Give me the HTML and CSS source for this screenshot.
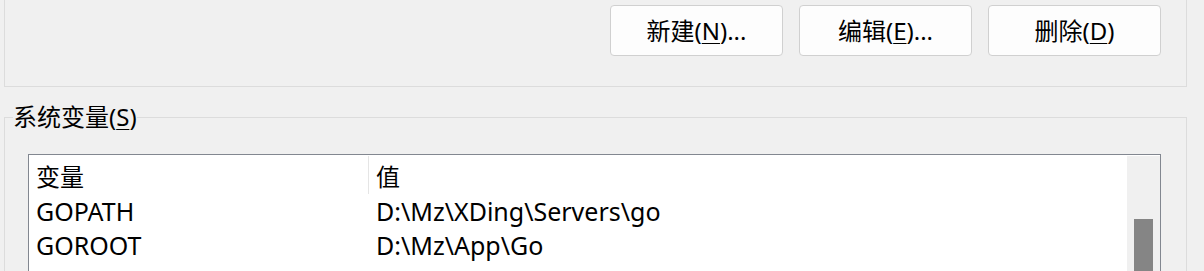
FILE: index.html
```html
<!DOCTYPE html>
<html lang="zh-CN">
<head>
  <meta charset="UTF-8">
  <title>环境变量</title>
  <link rel="stylesheet" href="styles.css">
</head>
<body>
  <div class="user-group">
    <div class="buttons">
      <button class="btn">新建(<u>N</u>)...</button>
      <button class="btn">编辑(<u>E</u>)...</button>
      <button class="btn">删除(<u>D</u>)</button>
    </div>
  </div>

  <fieldset class="sys-group">
    <legend>系统变量(<u>S</u>)</legend>
    <div class="listbox">
      <div class="list-main">
        <div class="row header">
          <div class="col name">变量</div>
          <div class="col value">值</div>
        </div>
        <div class="row">
          <div class="col name">GOPATH</div>
          <div class="col value">D:\Mz\XDing\Servers\go</div>
        </div>
        <div class="row">
          <div class="col name">GOROOT</div>
          <div class="col value">D:\Mz\App\Go</div>
        </div>
      </div>
      <div class="scrollbar">
        <div class="thumb"></div>
      </div>
    </div>
  </fieldset>
</body>
</html>
```

FILE: styles.css
```css
body {
  margin: 0;
  background: #f0f0f0;
  color: #000;
  font-family: "Noto Sans", "Noto Sans CJK SC", sans-serif;
  font-size: 24px;
  overflow: hidden;
  height: 271px;
}
u {
  text-underline-offset: 3px;
  text-decoration-thickness: 1px;
}
.user-group {
  margin-left: 4px;
  width: 1183px;
  height: 87px;
  border: 1px solid #dcdcdc;
  border-top: none;
  box-sizing: border-box;
}
.buttons {
  display: flex;
  justify-content: flex-end;
  gap: 16px;
  padding: 5px 25px 0 0;
}
.btn {
  width: 173px;
  height: 51px;
  background: #fdfdfd;
  border: 1px solid #d0d0d0;
  border-radius: 4px;
  font-family: "Noto Sans", "Noto Sans CJK SC", sans-serif;
  font-size: 24px;
  color: #000;
  padding: 0;
  line-height: 1;
}
.sys-group {
  margin: 15px 0 0 4px;
  width: 1183px;
  box-sizing: border-box;
  border: 1px solid #dcdcdc;
  border-bottom: none;
  padding: 22px 25px 0 8px;
  height: 200px;
}
.sys-group legend {
  padding: 0;
  line-height: 30px;
}
.listbox {
  display: flex;
  margin-left: 15px;
  border: 1px solid #828790;
  border-bottom: none;
  background: #fff;
  height: 140px;
  padding-top: 1px;
}
.list-main {
  flex: 1;
}
.row {
  display: flex;
  height: 34px;
  align-items: center;
  font-size: 25px;
}
.row.header {
  height: 38px;
  font-size: 24px;
}
.col {
  padding-left: 7px;
  white-space: nowrap;
}
.col.name {
  width: 332px;
}
.header .col.value {
  border-left: 1px solid #e5e5e5;
  height: 38px;
  display: flex;
  align-items: center;
}
.row:not(.header) .col.value {
  padding-left: 8px;
}
.scrollbar {
  width: 33px;
  background: #f0f0f0;
  display: flex;
  justify-content: center;
  padding-top: 63px;
}
.thumb {
  width: 19px;
  height: 100px;
  background: #858585;
}
```
